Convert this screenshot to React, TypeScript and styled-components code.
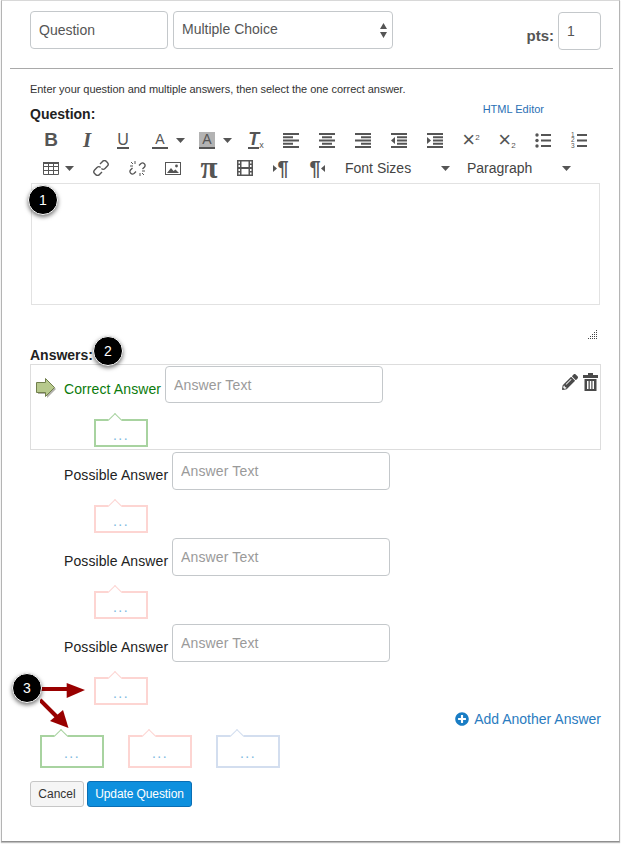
import React from "react";
import styled, { createGlobalStyle } from "styled-components";
import { FaPencilAlt, FaPlusCircle } from "react-icons/fa";

const GlobalStyle = createGlobalStyle`
  html, body {
    margin: 0;
    padding: 0;
    background: #ffffff;
  }
  * {
    box-sizing: border-box;
  }
`;

const ICON_COLOR = "#555555";

const Caret = () => (
  <svg width="9" height="5" viewBox="0 0 9 5">
    <path d="M0 0h9L4.5 5z" fill={ICON_COLOR} />
  </svg>
);

const LinesIcon = ({ rows }: { rows: [number, number][] }) => (
  <svg width="16" height="15" viewBox="0 0 16 15">
    {rows.map(([x, w], i) => (
      <rect key={i} x={x} y={i * 3.25} width={w} height="2" fill={ICON_COLOR} />
    ))}
  </svg>
);

const IndentIcon = ({ flip }: { flip?: boolean }) => (
  <svg width="16" height="15" viewBox="0 0 16 15">
    <rect x="0" y="0" width="16" height="2" fill={ICON_COLOR} />
    <rect x="6" y="3.25" width="10" height="2" fill={ICON_COLOR} />
    <rect x="6" y="6.5" width="10" height="2" fill={ICON_COLOR} />
    <rect x="6" y="9.75" width="10" height="2" fill={ICON_COLOR} />
    <rect x="0" y="13" width="16" height="2" fill={ICON_COLOR} />
    <path d={flip ? "M0 4l4 3.5L0 11z" : "M4 4L0 7.5 4 11z"} fill={ICON_COLOR} />
  </svg>
);

const BulletIcon = () => (
  <svg width="16" height="15" viewBox="0 0 16 15">
    <circle cx="2" cy="2" r="1.7" fill={ICON_COLOR} />
    <circle cx="2" cy="7.5" r="1.7" fill={ICON_COLOR} />
    <circle cx="2" cy="13" r="1.7" fill={ICON_COLOR} />
    <rect x="6" y="1" width="10" height="2" fill={ICON_COLOR} />
    <rect x="6" y="6.5" width="10" height="2" fill={ICON_COLOR} />
    <rect x="6" y="12" width="10" height="2" fill={ICON_COLOR} />
  </svg>
);

const NumberIcon = () => (
  <NumberList>
    <NumberColumn>
      <span>1</span>
      <span>2</span>
      <span>3</span>
    </NumberColumn>
    <svg width="11" height="15" viewBox="0 0 11 15">
      <rect x="1" y="1" width="10" height="2" fill={ICON_COLOR} />
      <rect x="1" y="6.5" width="10" height="2" fill={ICON_COLOR} />
      <rect x="1" y="12" width="10" height="2" fill={ICON_COLOR} />
    </svg>
  </NumberList>
);

const TableIcon = () => (
  <svg width="16" height="13" viewBox="0 0 16 13">
    <path
      d="M.5.5h15v12H.5zM.5 4.5h15M.5 8.5h15M5.5.5v12M10.5.5v12"
      fill="none"
      stroke={ICON_COLOR}
      strokeWidth="1"
    />
    <rect x="0" y="0" width="16" height="2" fill={ICON_COLOR} />
  </svg>
);

const LinkIcon = () => (
  <svg width="16" height="16" viewBox="0 0 16 16" fill="none" stroke={ICON_COLOR} strokeWidth="1.4">
    <path d="M7 4l2.5-2.5a2.6 2.6 0 0 1 3.9 0l1 1a2.6 2.6 0 0 1 0 3.6L12 8.5a2.6 2.6 0 0 1-3.6 0" />
    <path d="M9 12l-2.5 2.5a2.6 2.6 0 0 1-3.9 0l-1-1a2.6 2.6 0 0 1 0-3.6L4 7.5a2.6 2.6 0 0 1 3.6 0" />
  </svg>
);

const UnlinkIcon = () => (
  <svg width="17" height="17" viewBox="0 0 17 17" fill="none" stroke={ICON_COLOR} strokeWidth="1.3">
    <path d="M10 5.5l2-2a2.5 2.5 0 0 1 3.5 3.5l-2 2" />
    <path d="M7 11.5l-2 2A2.5 2.5 0 0 1 1.500 10l2-2" />
    <path d="M6 1v3M1 6h3M11 13v3M13 11h3M2 2l2 2M13 13l2 2" strokeWidth="1" />
  </svg>
);

const ImageIcon = () => (
  <svg width="16" height="13" viewBox="0 0 16 13">
    <rect x=".5" y=".5" width="15" height="12" fill="none" stroke={ICON_COLOR} />
    <path d="M2 11l4-5 2.500 3 2-1.500L14 11z" fill={ICON_COLOR} />
    <circle cx="11.500" cy="4" r="1.400" fill={ICON_COLOR} />
  </svg>
);

const FilmIcon = () => (
  <svg width="16" height="16" viewBox="0 0 16 16">
    <path
      d="M0 0h16v16H0zM1.500 1.500v2H3v-2zM1.500 5v2H3V5zM1.500 9v2H3V9zM1.500 12.500v2H3v-2zM13 1.500v2h1.500v-2zM13 5v2h1.500V5zM13 9v2h1.500V9zM13 12.500v2h1.500v-2zM4.500 1.500V7h7V1.500zM4.500 9v5.500h7V9z"
      fill={ICON_COLOR}
      fillRule="evenodd"
    />
  </svg>
);

const ParaArrow = ({ flip }: { flip?: boolean }) => (
  <svg width="4" height="7" viewBox="0 0 4 7">
    <path d={flip ? "M4 0v7L0 3.500z" : "M0 0v7l4-3.500z"} fill={ICON_COLOR} />
  </svg>
);

const TrashIcon = () => (
  <svg width="15" height="18" viewBox="0 0 15 18">
    <path
      d="M5 0h5v2h5v3H0V2h5zM1.500 6h12v12h-12zM4 8v8h1.500V8zM6.800 8v8h1.500V8zM9.500 8v8H11V8z"
      fill="#4a4a4a"
      fillRule="evenodd"
    />
  </svg>
);

const ANSWER_ARROW = "M.5 4.500h9V.5l9 9-9 9v-4h-9z";

const CorrectArrow = () => (
  <svg width="21" height="21" viewBox="0 0 21 21">
    <path d={ANSWER_ARROW} fill="#3c3c2c" opacity=".4" transform="translate(1.500 1.500)" />
    <path d={ANSWER_ARROW} fill="#b7c98c" stroke="#717f4c" strokeWidth="1" />
  </svg>
);

const Grip = () => (
  <svg width="9" height="9" viewBox="0 0 9 9">
    <path
      d="M8 0h1v1H8zM6 2h1v1H6zM8 2h1v1H8zM4 4h1v1H4zM6 4h1v1H6zM8 4h1v1H8zM2 6h1v1H2zM4 6h1v1H4zM6 6h1v1H6zM8 6h1v1H8zM0 8h1v1H0zM2 8h1v1H2zM4 8h1v1H4zM6 8h1v1H6zM8 8h1v1H8z"
      fill="#444444"
    />
  </svg>
);

const App = () => {
  const possibleRows = [0, 1, 2];

  return (
    <Page>
      <GlobalStyle />
      <Frame>
        <HeaderRow>
          <NameInput readOnly value="Question" />
          <TypeSelect>
            <span>Multiple Choice</span>
            <SelectArrows>
              <svg width="7" height="15" viewBox="0 0 7 15">
                <path d="M3.500 0L7 6H0zM3.500 15L0 9h7z" fill="#555555" />
              </svg>
            </SelectArrows>
          </TypeSelect>
          <PointsGroup>
            <PointsLabel>pts:</PointsLabel>
            <PointsInput readOnly value="1" />
          </PointsGroup>
        </HeaderRow>
        <Divider />
        <Instructions>
          Enter your question and multiple answers, then select the one correct answer.
        </Instructions>
        <QuestionHead>
          <FieldLabel>Question:</FieldLabel>
          <HtmlLink>HTML Editor</HtmlLink>
        </QuestionHead>
        <Toolbar>
          <ToolButton><BoldGlyph>B</BoldGlyph></ToolButton>
          <ToolButton><ItalicGlyph>I</ItalicGlyph></ToolButton>
          <ToolButton><UnderlineGlyph>U</UnderlineGlyph></ToolButton>
          <ToolButton $width={47} $split>
            <IconSlot><ColorGlyph>A</ColorGlyph></IconSlot>
            <Caret />
          </ToolButton>
          <ToolButton $width={51} $split>
            <IconSlot><ColorGlyph $filled>A</ColorGlyph></IconSlot>
            <Caret />
          </ToolButton>
          <ToolButton $width={34}>
            <ClearGlyph><span>T</span><small>x</small></ClearGlyph>
          </ToolButton>
          <ToolButton><LinesIcon rows={[[0, 16], [0, 10], [0, 16], [0, 10], [0, 16]]} /></ToolButton>
          <ToolButton><LinesIcon rows={[[0, 16], [3, 10], [0, 16], [3, 10], [0, 16]]} /></ToolButton>
          <ToolButton><LinesIcon rows={[[0, 16], [6, 10], [0, 16], [6, 10], [0, 16]]} /></ToolButton>
          <ToolButton><IndentIcon /></ToolButton>
          <ToolButton><IndentIcon flip /></ToolButton>
          <ToolButton><ScriptGlyph>×<sup>2</sup></ScriptGlyph></ToolButton>
          <ToolButton><ScriptGlyph>×<sub>2</sub></ScriptGlyph></ToolButton>
          <ToolButton><BulletIcon /></ToolButton>
          <ToolButton><NumberIcon /></ToolButton>
        </Toolbar>
        <Toolbar>
          <ToolButton $width={50} $split>
            <IconSlot $width={35}><TableIcon /></IconSlot>
            <Caret />
          </ToolButton>
          <ToolButton><LinkIcon /></ToolButton>
          <ToolButton><UnlinkIcon /></ToolButton>
          <ToolButton><ImageIcon /></ToolButton>
          <ToolButton><PiGlyph>π</PiGlyph></ToolButton>
          <ToolButton><FilmIcon /></ToolButton>
          <ToolButton><ParaArrow /><ParaGlyph>¶</ParaGlyph></ToolButton>
          <ToolButton><ParaGlyph>¶</ParaGlyph><ParaArrow flip /></ToolButton>
          <ListBox $width={122}>
            Font Sizes
            <Caret />
          </ListBox>
          <ListBox $width={121}>
            Paragraph
            <Caret />
          </ListBox>
        </Toolbar>
        <EditorBox>
          <StepBadge $left={-4} $top={1}>1</StepBadge>
        </EditorBox>
        <GripRow><Grip /></GripRow>
        <AnswersLabel>
          Answers:
          <StepBadge $left={63} $top={-9}>2</StepBadge>
        </AnswersLabel>
        <CorrectAnswer>
          <AnswerRow>
            <ArrowSlot><CorrectArrow /></ArrowSlot>
            <AnswerLabel $correct>Correct Answer</AnswerLabel>
            <AnswerInput $height={37} placeholder="Answer Text" />
            <AnswerTools>
              <PencilSlot><FaPencilAlt size={16} color="#4a4a4a" /></PencilSlot>
              <TrashIcon />
            </AnswerTools>
          </AnswerRow>
          <Comment $tone="green" $size="small" $inset={63} $gap={16}>...</Comment>
        </CorrectAnswer>
        {possibleRows.map((row) => (
          <PossibleAnswer key={row}>
            <AnswerRow>
              <AnswerLabel>Possible Answer</AnswerLabel>
              <AnswerInput $height={38} placeholder="Answer Text" />
            </AnswerRow>
            <Comment $tone="red" $size="small" $inset={64} $gap={15}>...</Comment>
          </PossibleAnswer>
        ))}
        <AddRow>
          <AddLink>
            <FaPlusCircle size={14} color="#1a7dc4" />
            Add Another Answer
          </AddLink>
        </AddRow>
        <GeneralComments>
          <Comment $tone="green" $size="large">...</Comment>
          <Comment $tone="red" $size="large">...</Comment>
          <Comment $tone="blue" $size="large">...</Comment>
        </GeneralComments>
        <Actions>
          <CancelButton>Cancel</CancelButton>
          <UpdateButton>Update Question</UpdateButton>
        </Actions>
        <StepBadge $left={10} $top={672}>3</StepBadge>
        <StepArrows width="50" height="50" viewBox="0 0 50 50">
          <path d="M0 6h28" stroke="#990000" strokeWidth="4" />
          <path d="M26.700 0L45 7l-18.300 8z" fill="#990000" />
          <path d="M0 17l19 19" stroke="#990000" strokeWidth="4" />
          <path d="M28.500 45L10 38l13-11z" fill="#990000" />
        </StepArrows>
      </Frame>
    </Page>
  );
};

const Page = styled.div`
  width: 621px;
  height: 844px;
  padding: 0 1px 2px 1px;
  font-family: "Liberation Sans", Arial, sans-serif;
  color: #2d3b45;
  overflow: hidden;
`;

const Frame = styled.div`
  position: relative;
  width: 619px;
  height: 842px;
  padding: 10px 18px 0 28px;
  background: #ffffff;
  border: 1px solid #b4b4b4;
  border-top-color: #d8d8d8;
  border-bottom-color: #8f8f8f;
  box-shadow: 0 1px 1px rgba(0, 0, 0, 0.25);
`;

const HeaderRow = styled.div`
  display: flex;
  gap: 5px;
  height: 39px;
`;

const NameInput = styled.input`
  width: 138px;
  height: 38px;
  padding: 0 8px;
  border: 1px solid #c4c8cb;
  border-radius: 4px;
  outline: none;
  font: 14px "Liberation Sans", Arial, sans-serif;
  color: #555555;
`;

const TypeSelect = styled.div`
  display: flex;
  align-items: center;
  justify-content: space-between;
  width: 220px;
  height: 38px;
  padding: 0 5px 2px 8px;
  border: 1px solid #c4c8cb;
  border-radius: 4px;
  font-size: 14px;
  color: #555555;
`;

const SelectArrows = styled.span`
  display: flex;
  margin-top: 2px;
`;

const PointsGroup = styled.div`
  display: flex;
  align-items: center;
  gap: 4px;
  margin-left: auto;
  padding-top: 1px;
`;

const PointsLabel = styled.span`
  padding-top: 8px;
  font-size: 15px;
  font-weight: 700;
  color: #555555;
`;

const PointsInput = styled.input`
  width: 43px;
  height: 38px;
  padding: 0 8px;
  border: 1px solid #c4c8cb;
  border-radius: 4px;
  outline: none;
  font: 14px "Liberation Sans", Arial, sans-serif;
  color: #555555;
`;

const Divider = styled.hr`
  height: 1px;
  margin: 18px -12px 0 -20px;
  border: none;
  background: #a9a9a9;
`;

const Instructions = styled.p`
  margin: 12px 0 0;
  font-size: 11px;
  line-height: 16px;
  letter-spacing: -0.04px;
  color: #333333;
`;

const QuestionHead = styled.div`
  display: flex;
  justify-content: space-between;
  height: 29px;
  padding-right: 57px;
`;

const FieldLabel = styled.span`
  padding-top: 9px;
  font-size: 14px;
  font-weight: 700;
  color: #222222;
`;

const HtmlLink = styled.a`
  padding-top: 6px;
  font-size: 11px;
  color: #2a6fb5;
`;

const Toolbar = styled.div`
  display: flex;
  align-items: center;
  height: 28px;
  padding-left: 3px;
`;

const ToolButton = styled.span<{ $width?: number; $split?: boolean }>`
  display: flex;
  align-items: center;
  justify-content: ${(props) => (props.$split ? "flex-start" : "center")};
  flex: none;
  width: ${(props) => props.$width ?? 36}px;
  height: 28px;
  color: ${ICON_COLOR};
`;

const IconSlot = styled.span<{ $width?: number }>`
  display: flex;
  align-items: center;
  justify-content: center;
  flex: none;
  width: ${(props) => props.$width ?? 38}px;
  margin-right: -3px;
`;

const BoldGlyph = styled.span`
  font-size: 19px;
  font-weight: 700;
`;

const ItalicGlyph = styled.span`
  font-family: "Liberation Serif", serif;
  font-size: 21px;
  font-style: italic;
  font-weight: 700;
`;

const UnderlineGlyph = styled.span`
  font-size: 16px;
  line-height: 15px;
  border-bottom: 2px solid ${ICON_COLOR};
`;

const ColorGlyph = styled.span<{ $filled?: boolean }>`
  display: block;
  width: 16px;
  height: 17px;
  font-size: 14px;
  line-height: 15px;
  text-align: center;
  background: ${(props) => (props.$filled ? "#b3b3b3" : "transparent")};
  border-bottom: 2px solid ${ICON_COLOR};
`;

const ClearGlyph = styled.span`
  display: flex;
  align-items: flex-end;
  span {
    font-size: 18px;
    font-style: italic;
    font-weight: 700;
    line-height: 15px;
    border-bottom: 2px solid ${ICON_COLOR};
  }
  small {
    font-size: 9px;
    line-height: 7px;
  }
`;

const ScriptGlyph = styled.span`
  font-size: 22px;
  line-height: 20px;
  sup,
  sub {
    font-size: 8px;
    line-height: 0;
  }
  sup {
    vertical-align: 7px;
  }
  sub {
    vertical-align: -1px;
  }
`;

const PiGlyph = styled.span`
  font-family: "Liberation Serif", serif;
  font-size: 31px;
  font-weight: 700;
  line-height: 20px;
`;

const ParaGlyph = styled.span`
  font-size: 20px;
  font-weight: 700;
  line-height: 20px;
`;

const NumberList = styled.span`
  display: flex;
  align-items: center;
`;

const NumberColumn = styled.span`
  display: flex;
  flex-direction: column;
  width: 5px;
  font-size: 6.5px;
  line-height: 5.5px;
  color: ${ICON_COLOR};
`;

const ListBox = styled.span<{ $width: number }>`
  display: flex;
  align-items: center;
  justify-content: space-between;
  flex: none;
  width: ${(props) => props.$width}px;
  padding: 0 7px 0 10px;
  font-size: 14px;
  color: #444444;
`;

const EditorBox = styled.div`
  position: relative;
  width: 569px;
  height: 122px;
  margin: 1px 0 0 1px;
  border: 1px solid #e2e2e2;
  background: #ffffff;
`;

const StepBadge = styled.span<{ $left: number; $top: number }>`
  position: absolute;
  left: ${(props) => props.$left}px;
  top: ${(props) => props.$top}px;
  display: flex;
  align-items: center;
  justify-content: center;
  width: 30px;
  height: 30px;
  border: 1px solid #ffffff;
  border-radius: 50%;
  background: #000000;
  box-shadow: 0 2px 4px rgba(0, 0, 0, 0.55);
  font-size: 14px;
  font-weight: 400;
  color: #ffffff;
  z-index: 2;
`;

const GripRow = styled.div`
  display: flex;
  justify-content: flex-end;
  height: 9px;
  margin-top: 25px;
  padding-right: 4px;
`;

const AnswersLabel = styled.div`
  position: relative;
  height: 19px;
  margin-top: 6px;
  font-size: 14px;
  font-weight: 700;
  line-height: 20px;
  color: #222222;
`;

const CorrectAnswer = styled.div`
  width: 571px;
  height: 86px;
  padding: 1px 2px 0 0;
  border: 1px solid #dddddd;
`;

const PossibleAnswer = styled.div`
  height: 86px;
  padding-top: 2px;
`;

const AnswerRow = styled.div`
  display: flex;
`;

const ArrowSlot = styled.span`
  display: flex;
  align-items: flex-start;
  width: 33px;
  padding: 12px 0 0 5px;
`;

const AnswerLabel = styled.span<{ $correct?: boolean }>`
  flex: none;
  width: ${(props) => (props.$correct ? "101px" : "108px")};
  margin-left: ${(props) => (props.$correct ? "0" : "34px")};
  padding-top: 15px;
  font-size: 14px;
  letter-spacing: 0.1px;
  color: ${(props) => (props.$correct ? "#0b7a0b" : "#222222")};
`;

const AnswerInput = styled.input<{ $height: number }>`
  width: 218px;
  height: ${(props) => props.$height}px;
  padding: 0 8px;
  border: 1px solid #c4c8cb;
  border-radius: 4px;
  outline: none;
  font: 14px "Liberation Sans", Arial, sans-serif;
  letter-spacing: 0.15px;
  &::placeholder {
    color: #9a9a9a;
  }
`;

const AnswerTools = styled.span`
  display: flex;
  align-items: flex-start;
  gap: 5px;
  margin-left: auto;
  padding: 7px 0 0;
`;

const PencilSlot = styled.span`
  display: flex;
  padding-top: 1px;
`;

const COMMENT_TONES = {
  green: "#a8d3a0",
  red: "#fdd5d2",
  blue: "#d3deef",
};

const Comment = styled.div<{
  $tone: keyof typeof COMMENT_TONES;
  $size: "small" | "large";
  $inset?: number;
  $gap?: number;
}>`
  position: relative;
  display: flex;
  align-items: flex-end;
  justify-content: center;
  width: ${(props) => (props.$size === "small" ? "54px" : "64px")};
  height: ${(props) => (props.$size === "small" ? "28px" : "33px")};
  margin: ${(props) => props.$gap ?? 0}px 0 0 ${(props) => props.$inset ?? 0}px;
  padding-bottom: ${(props) => (props.$size === "small" ? "0" : "3px")};
  border: 2px solid ${(props) => COMMENT_TONES[props.$tone]};
  font-size: 14px;
  line-height: 20px;
  letter-spacing: 1.5px;
  color: #7db8e0;
  background: #ffffff;
  &::before {
    content: "";
    position: absolute;
    left: 14px;
    top: -6px;
    width: 9px;
    height: 9px;
    background: #ffffff;
    border-top: 1px solid ${(props) => COMMENT_TONES[props.$tone]};
    border-left: 1px solid ${(props) => COMMENT_TONES[props.$tone]};
    transform: rotate(45deg);
  }
`;

const AddRow = styled.div`
  display: flex;
  justify-content: flex-end;
  height: 18px;
  margin-top: 2px;
`;

const AddLink = styled.a`
  display: flex;
  align-items: center;
  gap: 5px;
  font-size: 14px;
  color: #2a7cc0;
`;

const GeneralComments = styled.div`
  display: flex;
  gap: 24px;
  margin-top: 7px;
  padding-left: 10px;
`;

const Actions = styled.div`
  display: flex;
  gap: 3px;
  margin-top: 13px;
`;

const CancelButton = styled.button`
  width: 54px;
  height: 26px;
  padding: 0;
  border: 1px solid #c6c6c6;
  border-radius: 3px;
  background: #f5f5f5;
  font: 12px "Liberation Sans", Arial, sans-serif;
  color: #333333;
`;

const UpdateButton = styled.button`
  width: 105px;
  height: 26px;
  padding: 0;
  border: 1px solid #0a6eb4;
  border-radius: 3px;
  background: #0e90de;
  font: 12px "Liberation Sans", Arial, sans-serif;
  letter-spacing: -0.1px;
  color: #ffffff;
`;

const StepArrows = styled.svg`
  position: absolute;
  left: 38px;
  top: 682px;
  z-index: 1;
`;

export default App;
